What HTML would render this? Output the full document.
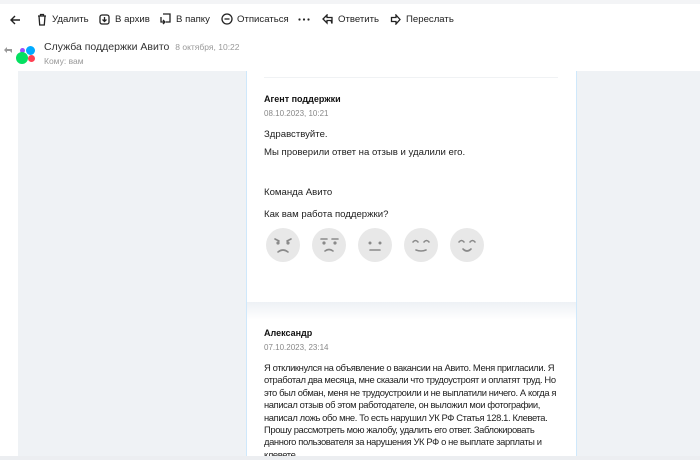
<!DOCTYPE html>
<html><head><meta charset="utf-8"><style>
*{margin:0;padding:0;box-sizing:border-box}
body{width:700px;height:460px;overflow:hidden;background:#fff;font-family:"Liberation Sans",sans-serif;color:#222;position:relative}
.a{position:absolute}
.tb{font-size:9.6px;color:#222;top:14px;white-space:nowrap}
.s{font-size:9.6px}
</style></head><body>
<div class="a" style="left:0;top:0;width:700px;height:4px;background:#f3f4f6"></div>
<svg class="a" style="left:9px;top:14px" width="12" height="12" viewBox="0 0 12 12" fill="none" stroke="#222" stroke-width="1.4"><path d="M11 6H2M6 2L2 6l4 4"/></svg>
<svg class="a" style="left:37px;top:13px" width="10" height="13" viewBox="0 0 10 13" fill="none" stroke="#222" stroke-width="1.3"><path d="M1 3h8M3.5 3V1.5h3V3M2 3l.7 9h4.6L8 3"/></svg>
<div class="a tb" style="left:52px">Удалить</div>
<svg class="a" style="left:99px;top:14px" width="11" height="11" viewBox="0 0 11 11" fill="none" stroke="#222" stroke-width="1.3"><rect x="1" y="1" width="9" height="9" rx="2"/><path d="M5.5 3v4M3.5 5.5l2 2 2-2"/></svg>
<div class="a tb" style="left:115px">В архив</div>
<svg class="a" style="left:160px;top:13px" width="12" height="12" viewBox="0 0 12 12" fill="none" stroke="#222" stroke-width="1.3"><path d="M3 1h7v8H6M1 4v5h3M3 11l2-2-2-2"/></svg>
<div class="a tb" style="left:176px">В папку</div>
<svg class="a" style="left:221px;top:13px" width="12" height="12" viewBox="0 0 12 12" fill="none" stroke="#222" stroke-width="1.3"><circle cx="6" cy="6" r="5"/><path d="M3.5 6h5"/></svg>
<div class="a tb" style="left:237px">Отписаться</div>
<svg class="a" style="left:298px;top:18px" width="12" height="3" viewBox="0 0 12 3" fill="#222"><circle cx="1.5" cy="1.5" r="1.1"/><circle cx="6" cy="1.5" r="1.1"/><circle cx="10.5" cy="1.5" r="1.1"/></svg>
<svg class="a" style="left:322px;top:14px" width="12" height="11" viewBox="0 0 12 11" fill="none" stroke="#222" stroke-width="1.3"><path d="M5 1L1 5l4 4V6.5h4l1 3V3.5H5z"/></svg>
<div class="a tb" style="left:338px">Ответить</div>
<svg class="a" style="left:390px;top:14px" width="11" height="11" viewBox="0 0 11 11" fill="none" stroke="#222" stroke-width="1.3"><path d="M6 1l4 4.5L6 10V7.5H1.5v-4H6z"/></svg>
<div class="a tb" style="left:406px">Переслать</div>
<svg class="a" style="left:4px;top:47px" width="8" height="6" viewBox="0 0 8 6" fill="#999"><path d="M3 0L0 3l3 3V4h3l2 2V2H3z"/></svg>
<div class="a" style="left:15px;top:44px;width:22px;height:22px">
<div class="a" style="left:5px;top:4px;width:5px;height:5px;border-radius:50%;background:#9b4dff"></div>
<div class="a" style="left:11px;top:2px;width:9px;height:9px;border-radius:50%;background:#0af"></div>
<div class="a" style="left:1px;top:8px;width:12px;height:12px;border-radius:50%;background:#04e061"></div>
<div class="a" style="left:13px;top:11px;width:7px;height:7px;border-radius:50%;background:#ff4053"></div>
</div>
<div class="a" style="left:44px;top:41px;font-size:10.5px;color:#333;white-space:nowrap">Служба поддержки Авито <span style="font-size:8.5px;color:#999;margin-left:3px">8 октября, 10:22</span></div>
<div class="a" style="left:44px;top:56px;font-size:8.5px;color:#999">Кому: вам</div>
<div class="a" style="left:18px;top:71px;width:682px;height:386px;background:#eff2f5"></div>
<div class="a" style="left:246px;top:71px;width:331px;height:385px;background:#fff;border-left:1px solid #cfe8fb;border-right:1px solid #cfe8fb;overflow:hidden">
<div class="a" style="left:17px;top:6px;width:294px;height:1px;background:#f0f2f4"></div>
<div class="a" style="left:0;top:231px;width:329px;height:18px;background:linear-gradient(#edf1f5,#fff)"></div>
<div class="a" style="left:17px;top:23px;font-size:9px;font-weight:bold;color:#111">Агент поддержки</div>
<div class="a" style="left:17px;top:38px;font-size:8px;color:#888">08.10.2023, 10:21</div>
<div class="a s" style="left:17px;top:58px">Здравствуйте.</div>
<div class="a s" style="left:17px;top:76px">Мы проверили ответ на отзыв и удалили его.</div>
<div class="a s" style="left:17px;top:116px">Команда Авито</div>
<div class="a s" style="left:17px;top:138px">Как вам работа поддержки?</div>
<svg class="a" style="left:19px;top:156px" width="220" height="36" viewBox="0 0 220 36" fill="none" stroke="#8a8a8a" stroke-width="1.6" stroke-linecap="round">
<g fill="#e8e8e8" stroke="none"><circle cx="17" cy="18" r="17"/><circle cx="63" cy="18" r="17"/><circle cx="109" cy="18" r="17"/><circle cx="155" cy="18" r="17"/><circle cx="201" cy="18" r="17"/></g>
<path d="M9 12l4 2M25 12l-4 2M12 25q5-4 10 0"/><g fill="#8a8a8a" stroke="none"><circle cx="12" cy="16" r="1.6"/><circle cx="22" cy="16" r="1.6"/><circle cx="58" cy="16" r="1.6"/><circle cx="69" cy="16" r="1.6"/><circle cx="104" cy="16" r="1.5"/><circle cx="114" cy="16" r="1.5"/></g>
<path d="M55 12h6M66 12h6M59 24q4-3 8 0"/>
<path d="M104 23h10"/>
<path d="M147 15q2.5-3 5 0M158 15q2.5-3 5 0M150 23q5 2 10 0"/>
<path d="M193 15q2.5-3 5 0M204 15q2.5-3 5 0M197 22q4 4 8 0"/>
</svg>
<div class="a" style="left:17px;top:257px;font-size:9px;font-weight:bold;color:#111">Александр</div>
<div class="a" style="left:17px;top:272px;font-size:8px;color:#888">07.10.2023, 23:14</div>
<div class="a" style="left:17px;top:291px;font-size:9.4px;line-height:12.4px;letter-spacing:-0.38px;white-space:nowrap">Я откликнулся на объявление о вакансии на Авито. Меня пригласили. Я<br>отработал два месяца, мне сказали что трудоустроят и оплатят труд. Но<br>это был обман, меня не трудоустроили и не выплатили ничего. А когда я<br>написал отзыв об этом работодателе, он выложил мои фотографии,<br>написал ложь обо мне. То есть нарушил УК РФ Статья 128.1. Клевета.<br>Прошу рассмотреть мою жалобу, удалить его ответ. Заблокировать<br>данного пользователя за нарушения УК РФ о не выплате зарплаты и<br>клевете.</div>
</div>
<div class="a" style="left:0;top:456px;width:700px;height:4px;background:#eceef1"></div>
</body></html>
